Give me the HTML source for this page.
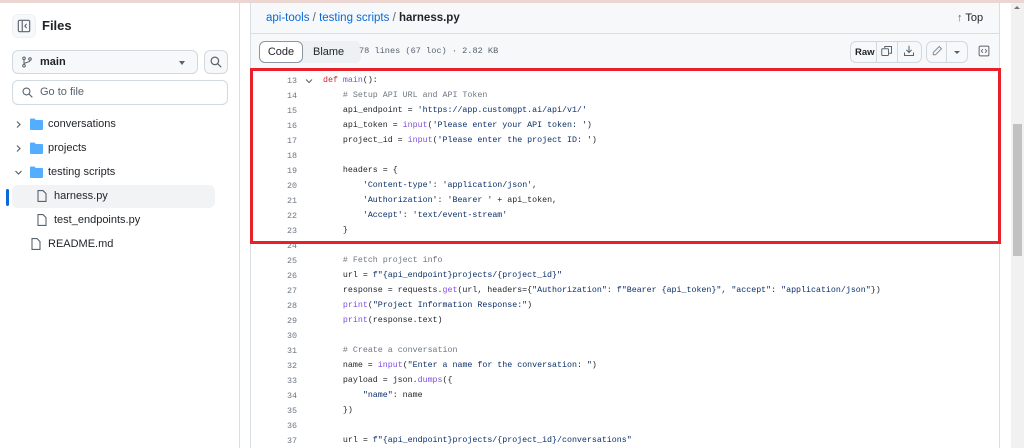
<!DOCTYPE html>
<html><head><meta charset="utf-8"><style>
*{box-sizing:border-box;margin:0;padding:0}
body{width:1024px;height:448px;overflow:hidden;background:#fff;font-family:"Liberation Sans",sans-serif;color:#1f2328;position:relative}
.abs{position:absolute}
.topstrip{left:0;top:0;width:1024px;height:3px;background:#ecd6d2}
.side{left:0;top:3px;width:240px;height:445px;border-right:1px solid #d8dee4;background:#fff}
.btn{position:absolute;border:1px solid #d1d9e0;border-radius:6px;background:#f6f8fa}
.tree{position:absolute;font-size:11px;color:#1f2328;white-space:nowrap}
.fold{fill:#54aeff}
.main{left:241px;top:3px;width:770px;height:445px;background:#fff}
.hdr{left:250px;top:3px;width:750px;height:31px;background:#f6f8fa;border-left:1px solid #d8dee4;border-right:1px solid #d8dee4;border-bottom:1px solid #d8dee4}
.tb{left:250px;top:34px;width:750px;height:34px;background:#f6f8fa;border-left:1px solid #d8dee4;border-right:1px solid #d8dee4}
.code{left:250px;top:68px;width:750px;height:380px;border-left:1px solid #d8dee4;border-right:1px solid #d8dee4}
.ln{position:absolute;left:0;width:46px;text-align:right;font-family:"Liberation Mono",monospace;font-size:8.4px;color:#6e7781}
.cl{position:absolute;left:72px;font-family:"Liberation Mono",monospace;font-size:8.3px;color:#1f2328;white-space:pre}
.k{color:#cf222e}.f{color:#8250df}.s{color:#0a3069}.c{color:#6e7781}
.red{left:250px;top:68px;width:751px;height:176px;border:3px solid #e8202a}
.sb{left:1011px;top:3px;width:13px;height:445px;background:#f1f1f1}
</style></head><body>
<div class="abs topstrip"></div>
<div class="abs side">
 <div class="btn" style="left:12px;top:11px;width:24px;height:24px;background:#f6f8fa;border-color:#eef1f4"></div>
 <svg class="abs" style="left:17px;top:16px" width="14" height="14" viewBox="0 0 16 16"><rect x="1.5" y="1.5" width="13" height="13" rx="1.5" fill="none" stroke="#59636e" stroke-width="1.3"/><line x1="6" y1="2" x2="6" y2="14" stroke="#59636e" stroke-width="1.3"/><path d="M11 5.5 L9 8 L11 10.5" fill="none" stroke="#59636e" stroke-width="1.3"/></svg>
 <div class="abs" style="left:42px;top:15px;font-size:13px;font-weight:bold">Files</div>
 <div class="btn" style="left:12px;top:47px;width:186px;height:24px"></div>
 <svg class="abs" style="left:21px;top:53px" width="12" height="12" viewBox="0 0 16 16"><circle cx="4" cy="3" r="1.7" fill="none" stroke="#59636e" stroke-width="1.4"/><circle cx="4" cy="13" r="1.7" fill="none" stroke="#59636e" stroke-width="1.4"/><circle cx="12" cy="4" r="1.7" fill="none" stroke="#59636e" stroke-width="1.4"/><path d="M4 5v6M12 6c0 3-8 2-8 5" fill="none" stroke="#59636e" stroke-width="1.4"/></svg>
 <div class="abs" style="left:40px;top:53px;font-size:11px;font-weight:bold">main</div>
 <div class="abs" style="left:179px;top:58px;width:0;height:0;border-left:3px solid transparent;border-right:3px solid transparent;border-top:4px solid #59636e"></div>
 <div class="btn" style="left:204px;top:47px;width:24px;height:24px"></div>
 <svg class="abs" style="left:210px;top:53px" width="12" height="12" viewBox="0 0 16 16"><circle cx="6.5" cy="6.5" r="5" fill="none" stroke="#59636e" stroke-width="1.6"/><line x1="10.2" y1="10.2" x2="15" y2="15" stroke="#59636e" stroke-width="1.6"/></svg>
 <div class="btn" style="left:12px;top:77px;width:216px;height:25px;background:#fff"></div>
 <svg class="abs" style="left:22px;top:84px" width="11" height="11" viewBox="0 0 16 16"><circle cx="6.5" cy="6.5" r="5" fill="none" stroke="#59636e" stroke-width="1.6"/><line x1="10.2" y1="10.2" x2="15" y2="15" stroke="#59636e" stroke-width="1.6"/></svg>
 <div class="abs" style="left:40px;top:83px;font-size:11px;color:#59636e">Go to file</div>

 <div class="abs" style="left:12px;top:182px;width:203px;height:23px;background:#f1f3f5;border-radius:6px"></div>
 <div class="abs" style="left:6px;top:186px;width:3px;height:17px;background:#0969da;border-radius:2px"></div>

 <svg class="abs" style="left:15px;top:117px" width="7" height="9" viewBox="0 0 7 9"><path d="M2 1.5l3 3-3 3" fill="none" stroke="#59636e" stroke-width="1.2"/></svg>
 <svg class="abs" style="left:30px;top:115px" width="13" height="12" viewBox="0 0 13 12"><path class="fold" d="M0 1.5a1 1 0 011-1h3.5l1.3 1.5H12a1 1 0 011 1V11a1 1 0 01-1 1H1a1 1 0 01-1-1z"/></svg>
 <div class="tree" style="left:48px;top:115px">conversations</div>
 <svg class="abs" style="left:15px;top:141px" width="7" height="9" viewBox="0 0 7 9"><path d="M2 1.5l3 3-3 3" fill="none" stroke="#59636e" stroke-width="1.2"/></svg>
 <svg class="abs" style="left:30px;top:139px" width="13" height="12" viewBox="0 0 13 12"><path class="fold" d="M0 1.5a1 1 0 011-1h3.5l1.3 1.5H12a1 1 0 011 1V11a1 1 0 01-1 1H1a1 1 0 01-1-1z"/></svg>
 <div class="tree" style="left:48px;top:139px">projects</div>
 <svg class="abs" style="left:14px;top:166px" width="9" height="7" viewBox="0 0 9 7"><path d="M1.5 2l3 3 3-3" fill="none" stroke="#59636e" stroke-width="1.2"/></svg>
 <svg class="abs" style="left:30px;top:163px" width="13" height="12" viewBox="0 0 13 12"><path class="fold" d="M0 1.5a1 1 0 011-1h3.5l1.3 1.5H12a1 1 0 011 1V11a1 1 0 01-1 1H1a1 1 0 01-1-1z"/></svg>
 <div class="tree" style="left:48px;top:163px">testing scripts</div>
 <svg class="abs" style="left:37px;top:187px" width="10" height="12" viewBox="0 0 10 12"><path d="M1 .6h5l3 3V11.4H1z" fill="none" stroke="#59636e" stroke-width="1.1"/></svg>
 <div class="tree" style="left:54px;top:187px">harness.py</div>
 <svg class="abs" style="left:37px;top:211px" width="10" height="12" viewBox="0 0 10 12"><path d="M1 .6h5l3 3V11.4H1z" fill="none" stroke="#59636e" stroke-width="1.1"/></svg>
 <div class="tree" style="left:54px;top:211px">test_endpoints.py</div>
 <svg class="abs" style="left:31px;top:235px" width="10" height="12" viewBox="0 0 10 12"><path d="M1 .6h5l3 3V11.4H1z" fill="none" stroke="#59636e" stroke-width="1.1"/></svg>
 <div class="tree" style="left:48px;top:235px">README.md</div>
</div>
<div class="abs main"></div>
<div class="abs hdr">
 <div class="abs" style="left:15px;top:9px;font-size:11.5px;white-space:nowrap"><span style="color:#0969da">api-tools</span> <span style="color:#59636e">/</span> <span style="color:#0969da">testing scripts</span> <span style="color:#59636e">/</span> <b>harness.py</b></div>
 <div class="abs" style="left:706px;top:9px;font-size:11px;white-space:nowrap"><span style="color:#59636e">&#8593;</span> Top</div>
</div>
<div class="abs tb">
 <div class="abs" style="left:8px;top:7px;width:102px;height:22px;background:#eef1f4;border-radius:6px"></div>
 <div class="abs" style="left:8px;top:7px;width:44px;height:22px;background:#fff;border:1px solid #8c959f;border-radius:6px;font-size:11px;text-align:center;line-height:20px">Code</div>
 <div class="abs" style="left:62px;top:12px;font-size:11px;color:#1f2328">Blame</div>
 <div class="abs" style="left:108px;top:12px;font-family:'Liberation Mono',monospace;font-size:8.6px;color:#59636e;white-space:nowrap">78 lines (67 loc) · 2.82 KB</div>
 <div class="btn" style="left:599px;top:7px;width:72px;height:22px"></div>
 <div class="abs" style="left:625px;top:8px;width:1px;height:20px;background:#d1d9e0"></div>
 <div class="abs" style="left:646px;top:8px;width:1px;height:20px;background:#d1d9e0"></div>
 <div class="abs" style="left:604px;top:13px;font-size:9.5px;font-weight:bold;color:#1f2328">Raw</div>
 <svg class="abs" style="left:630px;top:11px" width="12" height="12" viewBox="0 0 16 16"><rect x="1" y="5" width="9" height="9" rx="1" fill="none" stroke="#59636e" stroke-width="1.3"/><path d="M5 4V2h9v9h-3" fill="none" stroke="#59636e" stroke-width="1.3"/></svg>
 <svg class="abs" style="left:652px;top:11px" width="12" height="12" viewBox="0 0 16 16"><path d="M8 1v9M4.5 6.5L8 10l3.5-3.5M2 10v4h12v-4" fill="none" stroke="#59636e" stroke-width="1.4"/></svg>
 <div class="btn" style="left:675px;top:7px;width:42px;height:22px"></div>
 <div class="abs" style="left:695px;top:8px;width:1px;height:20px;background:#d1d9e0"></div>
 <svg class="abs" style="left:680px;top:11px" width="12" height="12" viewBox="0 0 16 16"><path d="M11 2l3 3-8 8H3v-3z" fill="none" stroke="#818b98" stroke-width="1.3"/></svg>
 <div class="abs" style="left:703px;top:17px;width:0;height:0;border-left:3px solid transparent;border-right:3px solid transparent;border-top:3px solid #59636e"></div>
 <svg class="abs" style="left:727px;top:11px" width="12" height="12" viewBox="0 0 16 16"><rect x="1.5" y="1.5" width="13" height="13" rx="1.5" fill="none" stroke="#59636e" stroke-width="1.3"/><path d="M6.5 5.5L4.5 8l2 2.5M9.5 5.5l2 2.5-2 2.5" fill="none" stroke="#59636e" stroke-width="1.2"/></svg>
</div>
<div class="abs code">
<div class="ln" style="top:8px">13</div><svg class="abs" style="left:54px;top:10px" width="8" height="6" viewBox="0 0 8 6"><path d="M1 1.5l3 3 3-3" fill="none" stroke="#59636e" stroke-width="1"/></svg><div class="cl" style="top:8px"><span class="k">def</span> <span class="f">main</span>():</div>
<div class="ln" style="top:23px">14</div><div class="cl" style="top:23px">    <span class="c"># Setup API URL and API Token</span></div>
<div class="ln" style="top:38px">15</div><div class="cl" style="top:38px">    api_endpoint = <span class="s">'https://app.customgpt.ai/api/v1/'</span></div>
<div class="ln" style="top:53px">16</div><div class="cl" style="top:53px">    api_token = <span class="f">input</span>(<span class="s">'Please enter your API token: '</span>)</div>
<div class="ln" style="top:68px">17</div><div class="cl" style="top:68px">    project_id = <span class="f">input</span>(<span class="s">'Please enter the project ID: '</span>)</div>
<div class="ln" style="top:83px">18</div>
<div class="ln" style="top:98px">19</div><div class="cl" style="top:98px">    headers = {</div>
<div class="ln" style="top:113px">20</div><div class="cl" style="top:113px">        <span class="s">'Content-type'</span>: <span class="s">'application/json'</span>,</div>
<div class="ln" style="top:128px">21</div><div class="cl" style="top:128px">        <span class="s">'Authorization'</span>: <span class="s">'Bearer '</span> + api_token,</div>
<div class="ln" style="top:143px">22</div><div class="cl" style="top:143px">        <span class="s">'Accept'</span>: <span class="s">'text/event-stream'</span></div>
<div class="ln" style="top:158px">23</div><div class="cl" style="top:158px">    }</div>
<div class="ln" style="top:173px">24</div>
<div class="ln" style="top:188px">25</div><div class="cl" style="top:188px">    <span class="c"># Fetch project info</span></div>
<div class="ln" style="top:203px">26</div><div class="cl" style="top:203px">    url = <span class="s">f"{api_endpoint}projects/{project_id}"</span></div>
<div class="ln" style="top:218px">27</div><div class="cl" style="top:218px">    response = requests.<span class="f">get</span>(url, headers={<span class="s">"Authorization"</span>: <span class="s">f"Bearer {api_token}"</span>, <span class="s">"accept"</span>: <span class="s">"application/json"</span>})</div>
<div class="ln" style="top:233px">28</div><div class="cl" style="top:233px">    <span class="f">print</span>(<span class="s">"Project Information Response:"</span>)</div>
<div class="ln" style="top:248px">29</div><div class="cl" style="top:248px">    <span class="f">print</span>(response.text)</div>
<div class="ln" style="top:263px">30</div>
<div class="ln" style="top:278px">31</div><div class="cl" style="top:278px">    <span class="c"># Create a conversation</span></div>
<div class="ln" style="top:293px">32</div><div class="cl" style="top:293px">    name = <span class="f">input</span>(<span class="s">"Enter a name for the conversation: "</span>)</div>
<div class="ln" style="top:308px">33</div><div class="cl" style="top:308px">    payload = json.<span class="f">dumps</span>({</div>
<div class="ln" style="top:323px">34</div><div class="cl" style="top:323px">        <span class="s">"name"</span>: name</div>
<div class="ln" style="top:338px">35</div><div class="cl" style="top:338px">    })</div>
<div class="ln" style="top:353px">36</div>
<div class="ln" style="top:368px">37</div><div class="cl" style="top:368px">    url = <span class="s">f"{api_endpoint}projects/{project_id}/conversations"</span></div>
</div>
<div class="abs red"></div>
<div class="abs sb"><div class="abs" style="left:0;top:3px;width:0;height:0;border-left:3px solid transparent;border-right:3px solid transparent;border-bottom:3px solid #777;margin-left:3px"></div><div class="abs" style="left:2px;top:121px;width:9px;height:132px;background:#c1c1c1"></div></div>
</body></html>
